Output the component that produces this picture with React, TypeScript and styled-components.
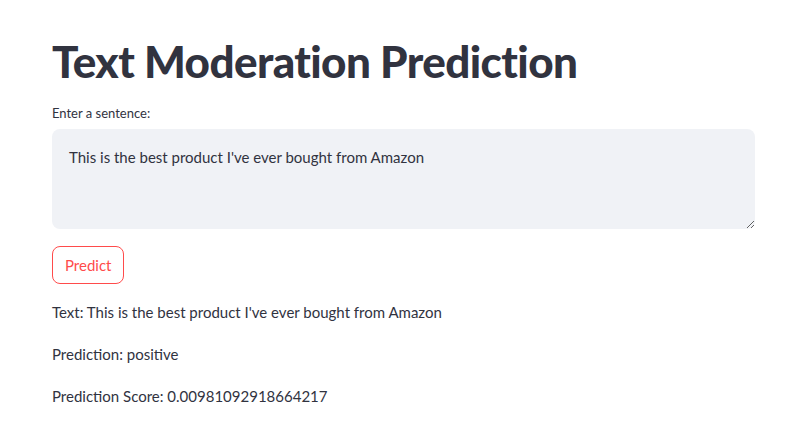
import React, { useState } from 'react';
import styled, { createGlobalStyle } from 'styled-components';

const GlobalStyle = createGlobalStyle`
  html, body {
    margin: 0;
    padding: 0;
    background: #ffffff;
  }
  body {
    font-family: Lato, "Noto Sans", sans-serif;
    color: #31333f;
  }
`;

export default function App() {
  const [sentence, setSentence] = useState<string>(
    "This is the best product I've ever bought from Amazon"
  );
  const score = '0.0098109291866421' + '7';

  return (
    <Main>
      <GlobalStyle />
      <Title>Text Moderation Prediction</Title>
      <Label>Enter a sentence:</Label>
      <TextArea
        value={sentence}
        onChange={(e) => setSentence(e.target.value)}
      />
      <PredictButton>Predict</PredictButton>
      <Output>Text: {sentence}</Output>
      <Output>Prediction: positive</Output>
      <Output>Prediction Score: {score}</Output>
    </Main>
  );
}

const Main = styled.main`
  width: 703px;
  padding: 31px 0 0 52px;
  display: flex;
  flex-direction: column;
  align-items: flex-start;
`;

const Title = styled.h1`
  margin: 0;
  font-size: 44px;
  font-weight: 900;
  line-height: 60px;
  color: #31333f;
  letter-spacing: -0.6px;
`;

const Label = styled.label`
  margin-top: 13px;
  font-size: 13px;
  line-height: 18px;
  color: #31333f;
`;

const TextArea = styled.textarea`
  box-sizing: border-box;
  margin-top: 7px;
  width: 703px;
  height: 100px;
  padding: 16px 17px;
  border: none;
  border-radius: 8px;
  background: #f0f2f6;
  font-family: Lato, "Noto Sans", sans-serif;
  font-size: 15px;
  line-height: 24px;
  color: #31333f;
  resize: vertical;
  outline: none;
`;

const PredictButton = styled.button`
  box-sizing: border-box;
  margin-top: 17px;
  height: 38px;
  padding: 0 12px;
  background: #ffffff;
  border: 1px solid #ff4b4b;
  border-radius: 8px;
  font-family: Lato, "Noto Sans", sans-serif;
  font-size: 15px;
  color: #ff4b4b;
  cursor: pointer;
`;

const Output = styled.p`
  margin: 16px 0 0;
  font-size: 15px;
  line-height: 25px;
  color: #31333f;
  & + & {
    margin-top: 17px;
  }
`;
